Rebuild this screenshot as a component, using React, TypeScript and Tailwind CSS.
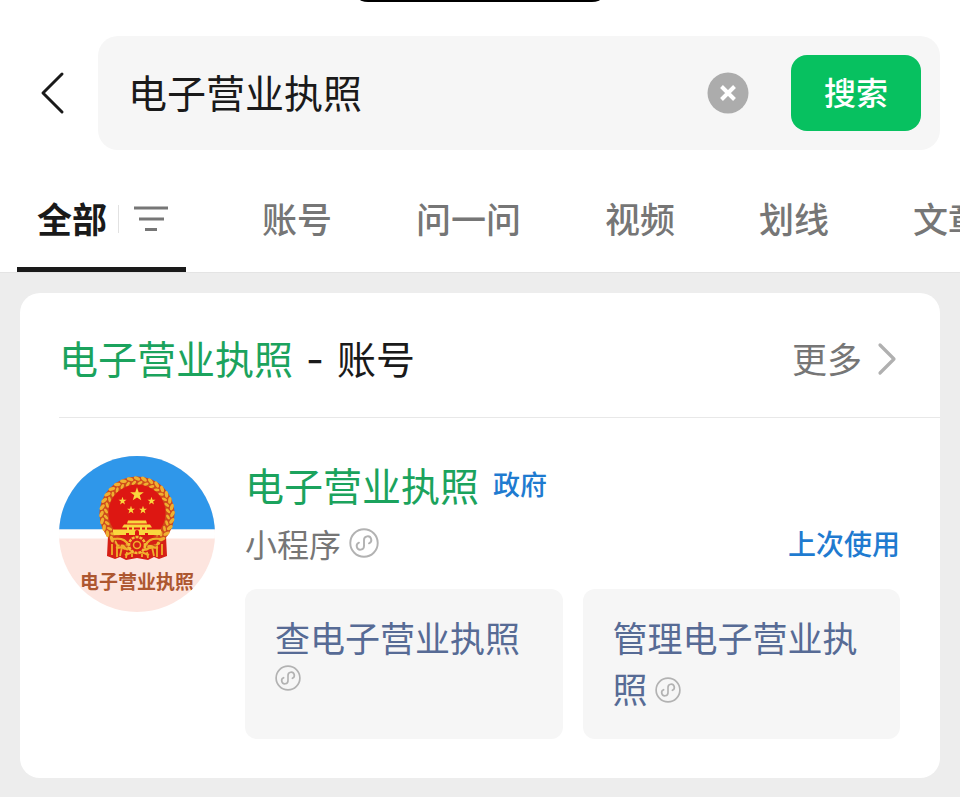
import { useState } from "react";

const tabs = ["账号", "问一问", "视频", "划线", "文章"];

const shortcuts = ["查电子营业执照", "管理电子营业执照"];

export default function App() {
  const [query, setQuery] = useState("电子营业执照");
  const [activeTab, setActiveTab] = useState("全部");

  return (
    <div className="relative min-h-screen overflow-x-hidden bg-[#ededed] font-['Noto_Sans_CJK_SC','Noto_Sans',sans-serif] text-[#1a1a1a]">
      <div className="absolute -top-[34px] left-1/2 h-9 w-[260px] -translate-x-1/2 rounded-full bg-black" />
      <header className="bg-white pt-9">
        <form className="flex items-center pr-5" onSubmit={(event) => event.preventDefault()}>
          <button type="button" aria-label="返回" className="flex w-[98px] shrink-0 justify-end pr-8">
            <svg width="28" height="44" viewBox="0 0 28 44" fill="none" stroke="#1a1a1a" strokeWidth="3" strokeLinecap="round" strokeLinejoin="round">
              <path d="M24 3 5 22 24 41" />
            </svg>
          </button>
          <div className="flex h-[114px] min-w-0 grow items-center rounded-[20px] bg-[#f6f6f6] pl-[30px] pr-[19px]">
            <input
              type="text"
              aria-label="搜索内容"
              value={query}
              onChange={(event) => setQuery(event.target.value)}
              className="h-[60px] min-w-0 grow bg-transparent pb-1 text-[39px] outline-none"
            />
            <button type="button" aria-label="清除" onClick={() => setQuery("")} className="mr-[42px] shrink-0">
              <svg width="42" height="42" viewBox="0 0 42 42">
                <circle cx="21" cy="21" r="20.5" fill="#acacac" />
                <path d="m14.5 14.5 13 13m0-13-13 13" stroke="#fff" strokeWidth="4" />
              </svg>
            </button>
            <button type="submit" className="h-19 w-[130px] shrink-0 rounded-2xl bg-[#07c160] pb-1 text-[32px] font-medium text-white">
              搜索
            </button>
          </div>
        </form>
        <nav className="flex overflow-hidden border-b border-[#e4e4e4] pl-[17px]">
          <div className="mr-[76px] flex h-[122px] shrink-0 items-center border-b-[5px] border-[#1a1a1a] px-5 pt-5">
            <button type="button" onClick={() => setActiveTab("全部")} className="text-[35px] font-bold">
              全部
            </button>
            <span className="ml-[11px] h-7 w-px bg-[#e2e2e2]" />
            <button type="button" aria-label="筛选" className="-mr-1 ml-[13px]">
              <svg width="38" height="28" viewBox="0 0 38 28" fill="none" stroke="#767676" strokeWidth="3.2">
                <path d="M2 3h34M7 14h25M13 24.5h12" />
              </svg>
            </button>
          </div>
          <div className="flex gap-[84px] pb-[5px] pt-5">
            {tabs.map((tab) => (
              <button
                key={tab}
                type="button"
                aria-pressed={tab === activeTab}
                onClick={() => setActiveTab(tab)}
                className="shrink-0 text-[35px] font-medium text-[#767676]"
              >
                {tab}
              </button>
            ))}
          </div>
        </nav>
      </header>

      <main className="p-5">
        <section className="rounded-[20px] bg-white pb-[39px] pl-[39px]">
          <div className="flex h-[125px] items-center justify-between border-b border-[#e8e8e8] pr-10 pt-[7px]">
            <h1 className="text-[39px]">
              <span className="text-[#1ba35d]">电子营业执照</span>
              <span className="mx-[13px] font-['Inter',sans-serif]">-</span>
              账号
            </h1>
            <a href="#more" className="flex items-center gap-3.5 text-[35px] text-[#767676]">
              更多
              <svg width="24" height="36" viewBox="0 0 24 36" fill="none" stroke="#b0b0b0" strokeWidth="3.2" strokeLinecap="round" strokeLinejoin="round">
                <path d="M4 4 18 18 4 32" />
              </svg>
            </a>
          </div>

          <article className="flex gap-[30px] pr-10 pt-[38px]">
            <AccountAvatar />
            <div className="min-w-0 grow">
              <h2 className="flex items-center gap-3.5 text-[39px] leading-[56px] text-[#1ba35d]">
                电子营业执照
                <span className="text-[27px] font-medium text-[#1f7bd0]">政府</span>
              </h2>
              <div className="flex h-[60px] items-center justify-between pt-0.5">
                <span className="flex items-center gap-2 text-[32px] text-[#767676]">
                  小程序
                  <MiniProgramIcon className="size-[30px]" />
                </span>
                <span className="text-[28px] font-medium text-[#1f7bd0]">上次使用</span>
              </div>
              <div className="mt-[17px] grid grid-cols-2 gap-5">
                {shortcuts.map((shortcut) => (
                  <a
                    key={shortcut}
                    href="#open"
                    className="h-[150px] rounded-xl bg-[#f6f6f6] pl-[30px] pr-[34px] pt-[22px] text-[35px] leading-7 text-[#576b95]"
                  >
                    <span className="leading-[51px]">{shortcut}</span>{" "}
                    <MiniProgramIcon className="inline-block size-[26px] align-baseline" />
                  </a>
                ))}
              </div>
            </div>
          </article>
        </section>
      </main>
    </div>
  );
}

function MiniProgramIcon({ className }: { className: string }) {
  return (
    <svg viewBox="0 0 28 28" fill="none" stroke="#b2b2b2" strokeWidth="1.8" strokeLinecap="round" className={className} aria-hidden="true">
      <circle cx="14" cy="14" r="12.8" />
      <path d="M9.3 13.7A3.4 3.4 0 1 0 14 16.7V11.3A3.4 3.4 0 1 1 18.7 14.3" />
    </svg>
  );
}

const STAR = "M0-10 2.4-3.2 9.5-3.1 3.8 1.2 5.9 8.1 0 4 -5.9 8.1 -3.8 1.2 -9.5-3.1 -2.4-3.2Z";

const GRAINS = Array.from({ length: 32 }, (_, i) => i * 11.25);

function AccountAvatar() {
  return (
    <div className="relative size-[156px] shrink-0 overflow-hidden rounded-full bg-[#fde5df]">
      <svg viewBox="0 0 156 156" className="size-full" aria-hidden="true">
        <path d="M0 0h156v73.5H0z" fill="#2f97ea" />
        <path d="M0 73.5h156v9H0z" fill="#fff" />
        {/* ribbons */}
        <path d="M49 80 48 100l8 3 5-2 6 3 11-2 11 2 6-3 5 2 8-3-1-20Z" fill="#d61f16" />
        <path d="M53 88v11M58 87v14M63 91l-2 9M103 88v11M98 87v14M93 91l2 9M68 96l-1 6M88 96l1 6M73 98v3M83 98v3" stroke="#f0b02c" strokeWidth="1.8" />
        {/* wheat wreath */}
        <circle cx="78" cy="58" r="37.5" fill="#cf4a1b" />
        {GRAINS.map((angle) => (
          <g key={angle} transform={`rotate(${angle} 78 58)`} fill="#f0b030">
            <ellipse cx="78" cy="22.5" rx="3.4" ry="1.7" transform="rotate(28 78 22.5)" />
            <ellipse cx="81" cy="27" rx="2.8" ry="1.4" transform="rotate(-32 81 27)" />
          </g>
        ))}
        <circle cx="78" cy="57" r="28.5" fill="#dd1712" />
        <g fill="#f9d73e">
          <path d={STAR} transform="translate(78 38.5) scale(.72)" />
          <path d={STAR} transform="translate(63.5 45) scale(.42)" />
          <path d={STAR} transform="translate(92.5 45) scale(.42)" />
          <path d={STAR} transform="translate(72 54) scale(.42)" />
          <path d={STAR} transform="translate(84 54) scale(.42)" />
          {/* gate */}
          <path d="M69 64.5h18l1 3H68ZM65 68.5h26l2 3H63Z" />
          <path d="M68 71h2v3h-2zM73 71h2v3h-2zM81 71h2v3h-2zM86 71h2v3h-2z" />
          <path d="M54 73.5h48v2.5l-1 3H55l-1-3Z" />
        </g>
        <path d="M76 79v-3a2 2 0 0 1 4 0v3M67 79v-2h3v2M86 79v-2h3v2" fill="#dd1712" />
        {/* cogwheel and knots */}
        <path d="M55 80.5h46l-4 8H59Z" fill="#d61f16" />
        <path d="M54 83q12-2 15 6M102 83q-12-2-15 6M57 92q8-2 12 2M99 92q-8-2-12 2M66 99q12-6 24 0" fill="none" stroke="#f0b02c" strokeWidth="2.2" />
        <circle cx="78" cy="89" r="8" fill="#d61f16" stroke="#f3bd36" strokeWidth="2.6" strokeDasharray="3 1" />
        <circle cx="78" cy="89" r="3.5" fill="none" stroke="#f0b02c" strokeWidth="1.5" />
      </svg>
      <span className="absolute inset-x-0 top-[111px] text-center text-[19px] font-bold leading-7 text-[#ad5730]">电子营业执照</span>
    </div>
  );
}
